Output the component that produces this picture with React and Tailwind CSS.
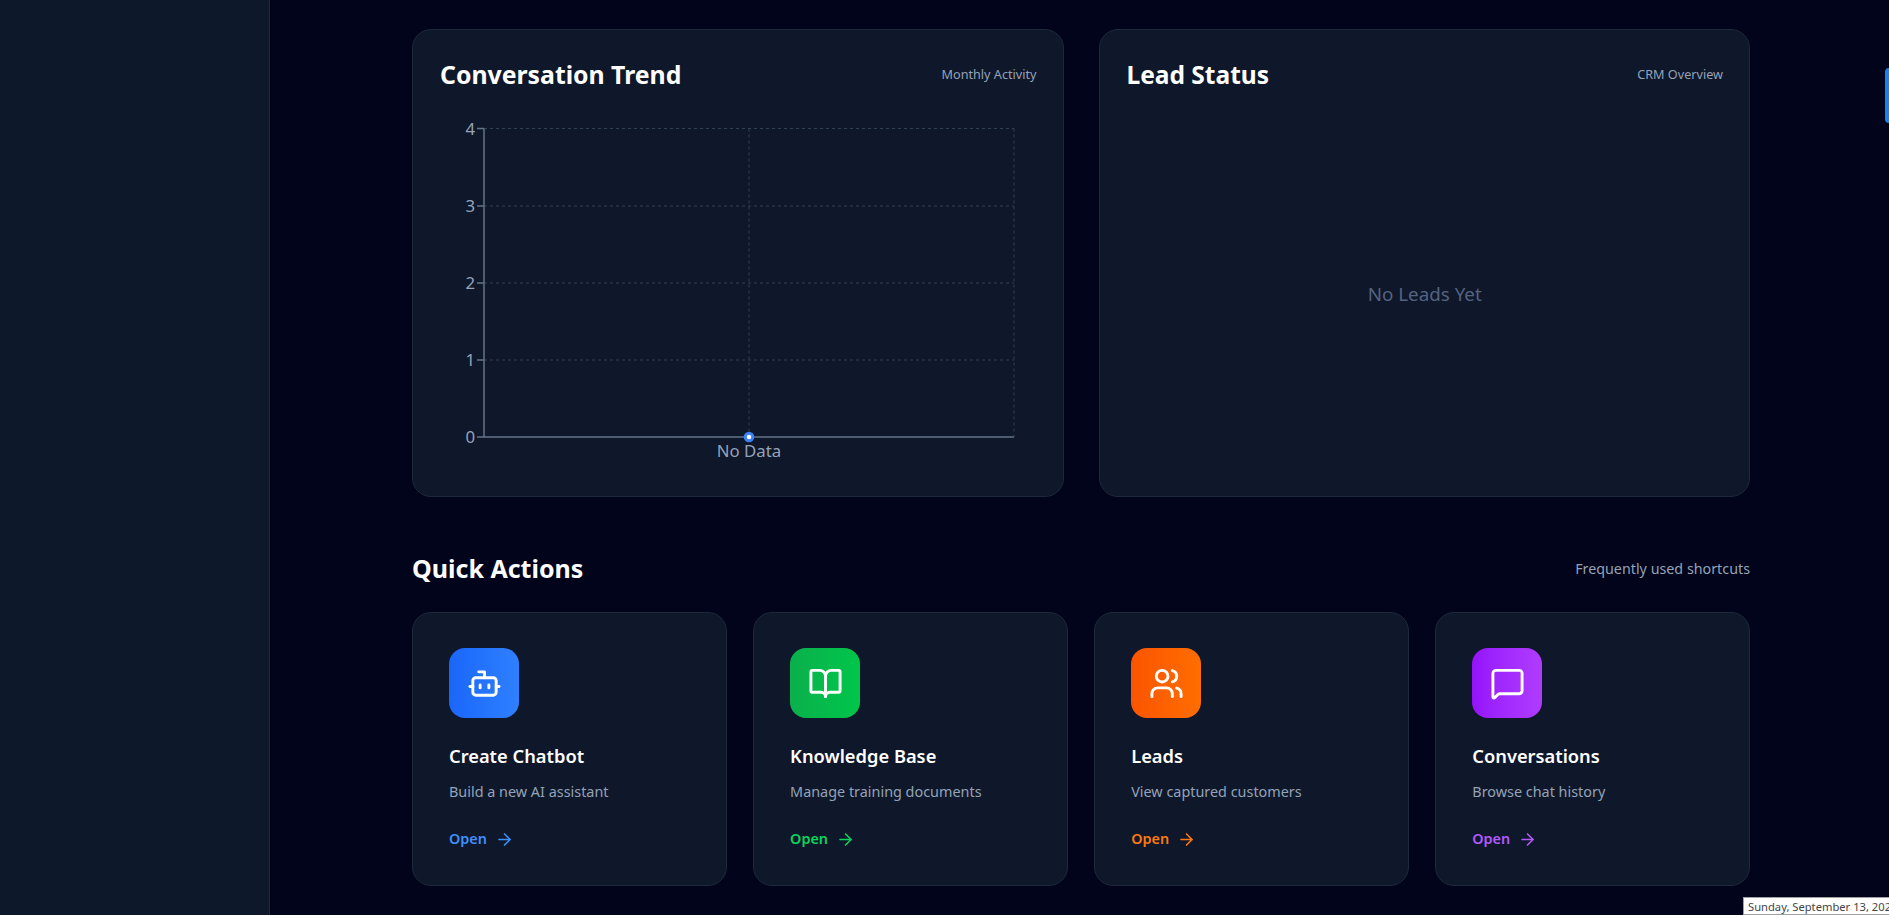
import { ArrowRight, Bot, BookOpen, Users, MessageSquare } from 'lucide-react';

const actions = [
  { title: 'Create Chatbot', desc: 'Build a new AI assistant', Icon: Bot, box: 'bg-gradient-to-r from-[#1a66fa] to-[#2f80ff]', open: 'text-[#3f8ffb]' },
  { title: 'Knowledge Base', desc: 'Manage training documents', Icon: BookOpen, box: 'bg-gradient-to-r from-[#0ab04c] to-[#00c64a]', open: 'text-[#0bd45c]' },
  { title: 'Leads', desc: 'View captured customers', Icon: Users, box: 'bg-gradient-to-r from-[#fb5400] to-[#ff6d00]', open: 'text-[#fb7a14]' },
  { title: 'Conversations', desc: 'Browse chat history', Icon: MessageSquare, box: 'bg-gradient-to-r from-[#9512fb] to-[#b03bff]', open: 'text-[#b259fb]' },
];

const rows = [
  { label: '4', y: 16.5 },
  { label: '3', y: 94 },
  { label: '2', y: 171 },
  { label: '1', y: 248 },
  { label: '0', y: 325 },
];

const TrendChart = () => (
  <svg width="596" height="360" viewBox="0 0 596 360" className="block">
    {rows.slice(0, 4).map(r => (
      <line key={r.label} x1="44" x2="574" y1={r.y} y2={r.y} stroke="#334155" strokeDasharray="3 3" />
    ))}
    <line x1="309" x2="309" y1="16.5" y2="325" stroke="#334155" strokeDasharray="3 3" />
    <line x1="574" x2="574" y1="16.5" y2="325" stroke="#334155" strokeDasharray="3 3" />
    <line x1="44" x2="44" y1="16.5" y2="325" stroke="#64748b" strokeWidth="1.5" />
    <line x1="44" x2="574" y1="325" y2="325" stroke="#64748b" strokeWidth="1.5" />
    {rows.map(r => (
      <g key={r.label}>
        <line x1="37" x2="44" y1={r.y} y2={r.y} stroke="#64748b" strokeWidth="1.5" />
        <text x="35" y={r.y + 6} textAnchor="end" fontSize="16.8" fill="#94a3b8">{r.label}</text>
      </g>
    ))}
    <circle cx="309" cy="325" r="3.8" fill="#ffffff" stroke="#3b82f6" strokeWidth="3" />
    <text x="309" y="345" textAnchor="middle" fontSize="16.8" fill="#94a3b8">No Data</text>
  </svg>
);

const ActionCard = ({ title, desc, Icon, box, open }) => (
  <div className="h-[274px] rounded-[19px] border border-[#1e293b] bg-[#0f172a] px-[36px] pt-[35px]">
    <div className={`flex h-[70px] w-[70px] items-center justify-center rounded-[16px] ${box}`}>
      <Icon size={35} color="#ffffff" strokeWidth={2} />
    </div>
    <h3 className="mt-[24px] text-[18.3px] leading-[28px] font-semibold text-white">{title}</h3>
    <p className="mt-[11px] text-[14.4px] leading-[22px] text-[#94a3b8]">{desc}</p>
    <div className={`mt-[24px] flex items-center gap-[8px] text-[14.4px] leading-[24px] font-semibold ${open}`}>
      Open <ArrowRight size={19} />
    </div>
  </div>
);

const App = () => {
  return (
    <div className="relative flex h-[915px] w-full overflow-hidden bg-[#01041a] font-['Noto_Sans',sans-serif]">
      <aside className="w-[270px] shrink-0 border-r border-[#1e293b] bg-[#0e182b]" />

      <main className="flex-1 pl-[142px] pr-[139px] pt-[29px]">
        <div className="grid grid-cols-2 gap-[35px]">
          <div className="h-[468px] rounded-[19px] border border-[#1e293b] bg-[#0f172a] py-[27px] pl-[27px] pr-[26px]">
            <div className="flex h-[36px] items-center justify-between">
              <h2 className="text-[24.8px] font-bold text-white">Conversation Trend</h2>
              <span className="mb-[2px] text-[12.65px] text-[#94a3b8]">Monthly Activity</span>
            </div>
            <div className="mt-[19px]">
              <TrendChart />
            </div>
          </div>

          <div className="h-[468px] rounded-[19px] border border-[#1e293b] bg-[#0f172a] py-[27px] pl-[27px] pr-[26px]">
            <div className="flex h-[36px] items-center justify-between">
              <h2 className="text-[24.5px] font-bold text-white">Lead Status</h2>
              <span className="mb-[2px] text-[12.65px] text-[#94a3b8]">CRM Overview</span>
            </div>
            <div className="mt-[20px] flex h-[362px] items-center justify-center text-[18.8px] text-[#556380]">
              No Leads Yet
            </div>
          </div>
        </div>

        <div className="mt-[52px] flex h-[40px] items-center justify-between">
          <h2 className="text-[25px] font-bold text-white">Quick Actions</h2>
          <span className="text-[14.3px] text-[#94a3b8]">Frequently used shortcuts</span>
        </div>

        <div className="mt-[23px] grid grid-cols-4 gap-[26.4px]">
          {actions.map(a => (
            <ActionCard key={a.title} {...a} />
          ))}
        </div>
      </main>

      <div className="absolute right-0 top-[68px] h-[55px] w-[4px] rounded-l-[5px] bg-[#1a80f0]" />
      <div className="absolute left-[1743px] top-[897px] h-[18px] w-[160px] border border-[#a0a0a0] bg-white pl-[4px] text-[11.2px] leading-[18px] whitespace-nowrap text-[#444]">
        Sunday, September 13, 2026
      </div>
    </div>
  );
};

export default App;
